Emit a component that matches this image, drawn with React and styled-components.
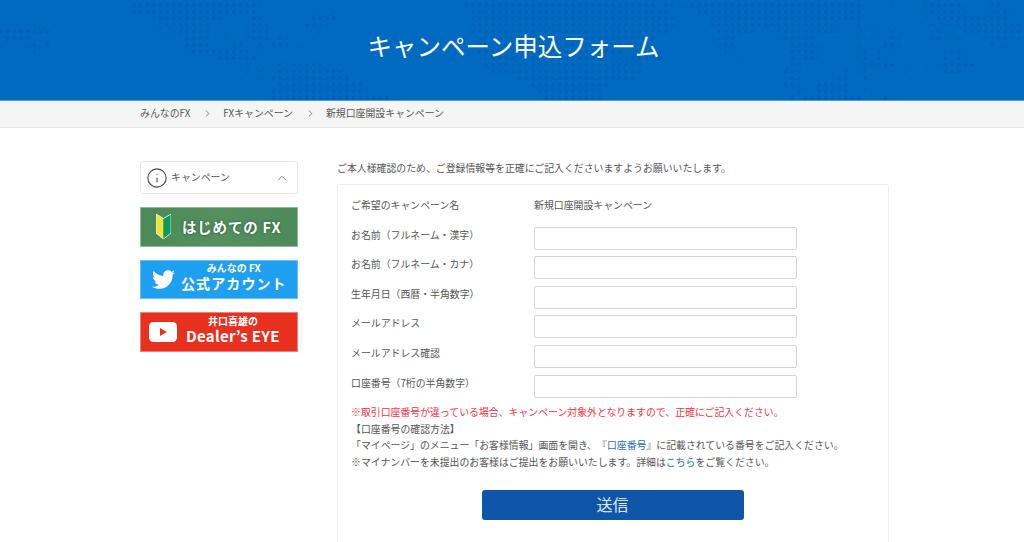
import React from "react";
import styled, { createGlobalStyle } from "styled-components";
import { ChevronRight, ChevronUp, Info } from "lucide-react";
import { FaTwitter } from "react-icons/fa";

const FONT = `"Noto Sans CJK JP", "Noto Sans", sans-serif`;

const GlobalStyle = createGlobalStyle`
  html, body { margin: 0; padding: 0; background: #fff; height: 542px; overflow: hidden; }
  body { font-family: ${FONT}; color: #555; font-size: 9.9px; }
  * { box-sizing: border-box; }
`;

/* Each row of the dotted world map: [from x, to x] runs in pixels */
const MAP = [
  [[133,262],[467,652],[665,862],[894,894],[927,962],[994,1001]],
  [[133,255],[313,313],[333,333],[473,668],[700,862],[927,962],[987,1014]],
  [[153,222],[255,262],[313,335],[473,675],[713,862],[927,927],[940,1007]],
  [[33,33],[153,153],[167,208],[255,268],[307,328],[473,675],[713,757],[767,840],[860,880],[934,934],[947,1020]],
  [[0,47],[173,208],[255,268],[473,669],[719,752],[779,839],[894,894],[941,941],[967,1021]],
  [[7,27],[167,167],[187,208],[228,228],[255,268],[280,288],[313,313],[473,650],[720,735],[780,813],[860,860],[874,874],[894,901],[934,941],[954,961],[987,1021]],
  [[0,0],[28,33],[47,47],[187,208],[233,241],[260,260],[273,288],[302,302],[480,640],[720,735],[793,820],[860,860],[887,901],[994,994],[1007,1007]],
  [[33,33],[187,250],[260,260],[480,620],[728,735],[793,800],[807,822],[860,867],[880,880],[894,894],[947,967]],
  [[220,255],[477,658],[742,742],[793,793],[807,820],[860,867],[880,887],[947,947],[961,967]],
  [[247,247],[280,322],[487,642],[793,800],[867,894],[927,927],[941,974]],
  [[247,247],[260,260],[280,342],[493,642],[787,800],[847,847],[860,867],[907,907],[947,961]],
  [[260,260],[273,348],[520,630],[793,800],[840,847],[867,867]],
  [[280,362],[533,607],[787,800],[820,833],[840,847]],
  [[273,368],[540,600],[800,807],[820,847],[867,867]],
  [[273,388],[547,597],[793,793],[807,861],[887,887]],
];
const STEP = 6.65;

function mapDots() {
  const dots = [];
  MAP.forEach((runs, r) => {
    const y = 5 + r * 6.64;
    runs.forEach(([from, to]) => {
      const a = Math.round((from - 1) / STEP);
      const b = Math.round((to - 1) / STEP);
      for (let k = a; k <= b; k++) dots.push([1 + k * STEP, y]);
    });
  });
  return dots;
}

const Hero = styled.header`
  position: relative;
  height: 101px;
  background: #0069c0;
  border-bottom: 1px solid #4a9be0;
  display: flex;
  align-items: center;
  justify-content: center;
  padding-bottom: 9px;
  padding-left: 3px;
`;
const HeroMap = styled.svg`
  position: absolute;
  inset: 0;
  width: 100%;
  height: 100px;
`;
const Title = styled.h1`
  position: relative;
  margin: 0;
  color: #fff;
  font-size: 24.5px;
  font-weight: 400;
  line-height: 32px;
`;

const Crumbs = styled.nav`
  height: 27px;
  background: #f5f5f5;
  border-bottom: 1px solid #e6e6e6;
  display: flex;
  align-items: center;
  padding: 0 0 2px 140px;
  color: #555;
  line-height: 16px;
`;
const CrumbArrow = styled(ChevronRight)`
  margin: 0 10px 0 12px;
  color: #777;
`;

const Content = styled.div`
  display: flex;
  padding: 33px 0 0 140px;
  gap: 39px;
`;
const Side = styled.aside`
  width: 158px;
  flex: none;
  display: flex;
  flex-direction: column;
`;
const SideHead = styled.div`
  height: 33px;
  border: 1px solid #e8e8e8;
  border-radius: 3px;
  display: flex;
  align-items: center;
  padding: 0 8px 0 5px;
  color: #555;
  margin-bottom: 13px;
`;
const SideLabel = styled.span`
  flex: 1;
  margin-left: 3px;
  padding-bottom: 2px;
`;
const Banner = styled.a`
  height: 39.5px;
  margin-bottom: 13px;
  display: flex;
  align-items: center;
  color: #fff;
  font-weight: 700;
  padding-left: ${(p) => p.$pad}px;
  gap: ${(p) => p.$gap}px;
  background: ${(p) => p.$bg};
  border: 1px solid ${(p) => p.$edge};
`;
const BannerStack = styled.div`
  display: flex;
  flex-direction: column;
  align-items: center;
  padding-bottom: ${(p) => p.$lift}px;
`;
const BannerMain = styled.span`
  font-size: ${(p) => p.$size}px;
  line-height: ${(p) => p.$line}px;
  letter-spacing: ${(p) => p.$track}px;
  white-space: nowrap;
  text-shadow: ${(p) => (p.$shadow ? "0 0 3px rgba(20,60,30,.7)" : "none")};
`;
const BannerSmall = styled.span`
  font-size: ${(p) => p.$size}px;
  line-height: 11px;
  white-space: nowrap;
`;

const Main = styled.main`
  width: 552px;
  flex: none;
`;
const Lead = styled.p`
  margin: -1px 0 8px;
  line-height: 16px;
`;
const Card = styled.section`
  border: 1px solid #eeeeee;
  border-radius: 3px;
  padding: 12px 13px 30px;
  height: 400px;
`;
const Rows = styled.div`
  display: flex;
  flex-direction: column;
  gap: 6.6px;
`;
const Row = styled.div`
  display: flex;
  align-items: flex-start;
  min-height: 23px;
  line-height: 16px;
`;
const RowLabel = styled.label`
  width: 183px;
  flex: none;
`;
const Input = styled.input`
  width: 263px;
  height: 23px;
  border: 1px solid #d4d4d4;
  border-radius: 2px;
  background: #fff;
  padding: 0 6px;
`;
const Notes = styled.div`
  margin-top: 6.5px;
  line-height: 16.5px;
`;
const NoteLine = styled.p`
  margin: 0;
  text-spacing-trim: space-all;
  color: ${(p) => (p.$alert ? "#f5333f" : "#555")};
`;
const NoteLink = styled.a`
  color: #2a6fb5;
`;
const Actions = styled.div`
  display: flex;
  justify-content: center;
  margin-top: 20px;
  padding-right: 1px;
`;
const Submit = styled.button`
  width: 262px;
  height: 30px;
  border: 0;
  border-radius: 3px;
  background: #0f56a8;
  color: #dfe8f4;
  font-family: ${FONT};
  font-size: 16px;
  line-height: 28px;
  padding: 0 0 2px;
`;

const FIELDS = [
  "お名前（フルネーム・漢字）",
  "お名前（フルネーム・カナ）",
  "生年月日（西暦・半角数字）",
  "メールアドレス",
  "メールアドレス確認",
  "口座番号（7桁の半角数字）",
];

const BeginnerMark = () => (
  <svg width="15" height="25" viewBox="0 0 15 25">
    <path d="M0 0 L7.5 4.5 V25 L0 19 Z" fill="#f4e23c" />
    <path d="M15 0 L7.5 4.5 V25 L15 19 Z" fill="#0c9a5a" />
    <path d="M0 0 L7.5 4.5 L15 0 V19 L7.5 25 L0 19 Z" fill="none" stroke="#fff" strokeWidth="0.8" />
  </svg>
);

const PlayBadge = () => (
  <svg width="28" height="20" viewBox="0 0 28 20">
    <rect width="28" height="20" rx="4.5" fill="#fff" />
    <path d="M11 6 L18 10 L11 14 Z" fill="#e8301f" />
  </svg>
);

export default function App() {
  return (
    <>
      <GlobalStyle />
      <Hero>
        <HeroMap viewBox="0 0 1024 100" aria-hidden="true">
          {mapDots().map(([x, y], i) => (
            <circle key={i} cx={x} cy={y} r="1.7" fill="#0062b3" />
          ))}
        </HeroMap>
        <Title>キャンペーン申込フォーム</Title>
      </Hero>
      <Crumbs>
        <span>みんなのFX</span>
        <CrumbArrow size={11} />
        <span>FXキャンペーン</span>
        <CrumbArrow size={11} />
        <span>新規口座開設キャンペーン</span>
      </Crumbs>
      <Content>
        <Side>
          <SideHead>
            <Info size={22} strokeWidth={1.2} color="#444" />
            <SideLabel>キャンペーン</SideLabel>
            <ChevronUp size={14} strokeWidth={1.6} color="#777" />
          </SideHead>
          <Banner $bg="linear-gradient(100deg,#4a8a58,#55905f 50%,#4c8a5a)" $edge="#8fbd9a" $pad={15} $gap={11}>
            <BeginnerMark />
            <BannerMain $size={14.5} $line={20} $track={0.8} $shadow>はじめての FX</BannerMain>
          </Banner>
          <Banner $bg="#1f9fef" $edge="#6cc0f5" $pad={11} $gap={6}>
            <FaTwitter size={23} />
            <BannerStack $lift={3}>
              <BannerSmall $size={10}>みんなの FX</BannerSmall>
              <BannerMain $size={14} $line={20} $track={1.1}>公式アカウント</BannerMain>
            </BannerStack>
          </Banner>
          <Banner $bg="#e8301f" $edge="#f0807a" $pad={8} $gap={9}>
            <PlayBadge />
            <BannerStack $lift={3}>
              <BannerSmall $size={10}>井口喜雄の</BannerSmall>
              <BannerMain $size={15} $line={20} $track={0.3}>Dealer’s EYE</BannerMain>
            </BannerStack>
          </Banner>
        </Side>
        <Main>
          <Lead>ご本人様確認のため、ご登録情報等を正確にご記入くださいますようお願いいたします。</Lead>
          <Card>
            <Rows>
              <Row>
                <RowLabel>ご希望のキャンペーン名</RowLabel>
                <span>新規口座開設キャンペーン</span>
              </Row>
              {FIELDS.map((f) => (
                <Row key={f}>
                  <RowLabel>{f}</RowLabel>
                  <Input type="text" />
                </Row>
              ))}
            </Rows>
            <Notes>
              <NoteLine $alert>※取引口座番号が違っている場合、キャンペーン対象外となりますので、正確にご記入ください。</NoteLine>
              <NoteLine>【口座番号の確認方法】</NoteLine>
              <NoteLine>
                「マイページ」のメニュー「お客様情報」画面を開き、『<NoteLink>口座番号</NoteLink>』に記載されている番号をご記入ください。
              </NoteLine>
              <NoteLine>
                ※マイナンバーを未提出のお客様はご提出をお願いいたします。詳細は<NoteLink>こちら</NoteLink>をご覧ください。
              </NoteLine>
            </Notes>
            <Actions>
              <Submit type="button">送信</Submit>
            </Actions>
          </Card>
        </Main>
      </Content>
    </>
  );
}
